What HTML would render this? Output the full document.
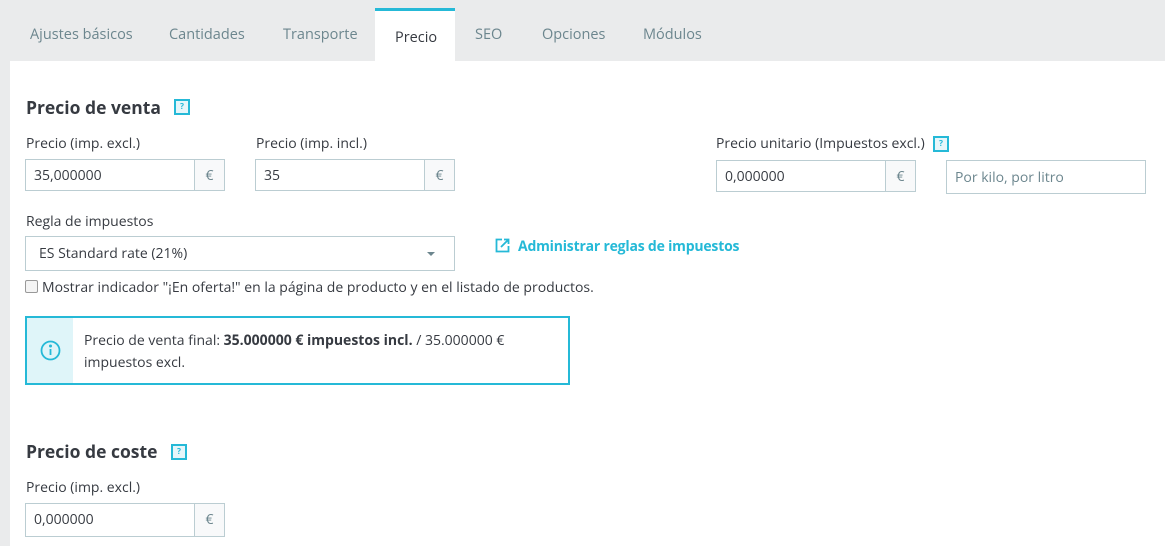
<!DOCTYPE html>
<html><head><meta charset="utf-8"><style>
body{margin:0;width:1165px;height:546px;background:#eaebec;font-family:"Open Sans","Liberation Sans",sans-serif;color:#363a41;overflow:hidden;position:relative}
.a{position:absolute;white-space:nowrap}
.tab{position:absolute;top:25px;font-size:14.5px;color:#6c868e}
.panel{position:absolute;left:10px;top:61px;right:0;bottom:0;background:#fff}
h2{position:absolute;margin:0;font-size:17.5px;font-weight:bold;color:#363a41}
.q{position:absolute;width:12px;height:12px;border:2px solid #25b9d7;background:#e6f6fa;color:#25b9d7;font-size:8px;line-height:12px;text-align:center;font-weight:bold}
.lbl{position:absolute;font-size:14px;color:#363a41}
.inp{position:absolute;height:32px;border:1px solid #bbcdd2;box-sizing:border-box;font-size:14px;line-height:30px;padding-left:8px;background:#fff}
.eur{position:absolute;right:0;top:0;width:29px;height:30px;border-left:1px solid #bbcdd2;background:#f8f9fa;color:#6c868e;text-align:center}
</style></head><body>
<div class="tab" style="left:30px">Ajustes básicos</div>
<div class="tab" style="left:169px">Cantidades</div>
<div class="tab" style="left:283px">Transporte</div>
<div class="panel"></div>
<div class="a" style="left:375px;top:8px;width:80px;height:53px;background:#fff;border-top:3px solid #25b9d7;box-sizing:border-box"></div>
<div class="tab" style="left:395px;top:28px;color:#363a41">Precio</div>
<div class="tab" style="left:475px">SEO</div>
<div class="tab" style="left:542px">Opciones</div>
<div class="tab" style="left:643px">Módulos</div>

<h2 style="left:26px;top:96px">Precio de venta</h2>
<div class="q" style="left:174px;top:99px">?</div>
<div class="lbl" style="left:26px;top:134px">Precio (imp. excl.)</div>
<div class="lbl" style="left:256px;top:134px">Precio (imp. incl.)</div>
<div class="lbl" style="left:716px;top:134px">Precio unitario (Impuestos excl.)</div>
<div class="q" style="left:933px;top:136px">?</div>
<div class="inp" style="left:25px;top:159px;width:200px;line-height:32px">35,000000<div class="eur">€</div></div>
<div class="inp" style="left:255px;top:159px;width:200px;line-height:32px">35<div class="eur">€</div></div>
<div class="inp" style="left:716px;top:160px;width:200px;line-height:32px">0,000000<div class="eur">€</div></div>
<div class="inp" style="left:946px;top:160px;width:200px;height:34px;line-height:34px;color:#6c868e">Por kilo, por litro</div>

<div class="lbl" style="left:26px;top:212px">Regla de impuestos</div>
<div class="inp" style="left:25px;top:236px;width:430px;height:35px;line-height:33px;padding-left:13px">ES Standard rate (21%)
<div class="a" style="right:19px;top:15px;border:4px solid transparent;border-top:4px solid #6c868e;border-bottom:0"></div></div>
<svg class="a" style="left:495px;top:238px" width="15" height="15" viewBox="0 0 15 15" fill="none" stroke="#25b9d7" stroke-width="1.8"><path d="M7 1.5H1.5v12h12V8"/><path d="M9 1.5h4.5V6M13.5 1.5L6 9"/></svg>
<div class="a" style="left:518px;top:237px;font-size:14px;font-weight:bold;color:#25b9d7;letter-spacing:-0.2px">Administrar reglas de impuestos</div>
<div class="a" style="left:25px;top:280px;width:11px;height:11px;border:1px solid #999;border-radius:2px;background:#f4f4f4"></div>
<div class="lbl" style="left:42px;top:278px">Mostrar indicador "¡En oferta!" en la página de producto y en el listado de productos.</div>

<div class="a" style="left:25px;top:316px;width:545px;height:69px;border:2px solid #25b9d7;box-sizing:border-box;background:#fff">
<div class="a" style="left:0;top:0;width:46px;height:65px;background:#dff5f9"></div>
<svg class="a" style="left:13px;top:22px" width="21" height="21" viewBox="0 0 21 21" fill="none" stroke="#25b9d7" stroke-width="1.8"><circle cx="10.5" cy="10.5" r="9"/><path d="M10.5 9v6"/><circle cx="10.5" cy="6" r=".6" fill="#25b9d7"/></svg>
<div class="a" style="left:57px;top:12px;font-size:14px;line-height:22px;white-space:normal;width:470px">Precio de venta final: <b>35.000000 € impuestos incl.</b> / 35.000000 €<br>impuestos excl.</div>
</div>

<h2 style="left:26px;top:440px">Precio de coste</h2>
<div class="q" style="left:171px;top:444px">?</div>
<div class="lbl" style="left:26px;top:478px">Precio (imp. excl.)</div>
<div class="inp" style="left:25px;top:503px;width:200px;height:34px;line-height:32px">0,000000<div class="eur" style="height:32px;line-height:32px">€</div></div>
</body></html>
